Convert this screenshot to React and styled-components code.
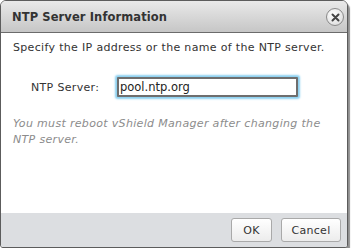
import styled, { createGlobalStyle } from "styled-components";

const Global = createGlobalStyle`
  body {
    margin: 0;
    background: #ffffff;
    font-family: "DejaVu Sans", Verdana, sans-serif;
  }
`;

const Dialog = styled.div`
  width: 346px;
  height: 246px;
  border: 1px solid #5c5c5c;
  border-radius: 6px 6px 3px 3px;
  box-shadow: 2px 3px 1px #8f8f8f;
  display: flex;
  flex-direction: column;
  overflow: hidden;
  background: #fff;
`;

const Header = styled.div`
  height: 31px;
  flex: none;
  display: flex;
  align-items: center;
  justify-content: space-between;
  padding: 0 3px 0 11px;
  background: linear-gradient(#e9e9e9, #c6c6c6);
  border-bottom: 1px solid #6b6b6b;
`;

const Title = styled.div`
  font-size: 11.5px;
  font-weight: bold;
  color: #333;
  letter-spacing: 0.1px;
`;

const CloseBtn = styled.div`
  width: 16px;
  height: 16px;
  border-radius: 50%;
  border: 1px solid #8a8a8a;
  background: radial-gradient(circle at 40% 35%, #ffffff, #d6d6d6);
  display: flex;
  align-items: center;
  justify-content: center;
  margin-top: 1px;
`;

const Body = styled.div`
  flex: 1;
  padding: 8px 12px 0 12px;
  color: #333;
  font-size: 11px;
  letter-spacing: 0.33px;
`;

const Intro = styled.div`
  line-height: 14px;
`;

const FieldRow = styled.div`
  display: flex;
  align-items: center;
  margin-top: 22px;
  padding-left: 18px;
`;

const Label = styled.div`
  width: 86px;
  font-size: 11px;
`;

const Input = styled.input`
  width: 175px;
  height: 16px;
  border: 2px solid #6e6e6e;
  border-radius: 1px;
  padding: 0 1px;
  font-family: "DejaVu Sans", Verdana, sans-serif;
  font-size: 11.5px;
  color: #222;
  outline: none;
  box-shadow: 0 0 2px 2px #8cd0f0;
`;

const Note = styled.div`
  margin-top: 19px;
  font-style: italic;
  color: #8c8c8c;
  line-height: 16px;
  font-size: 11px;
`;

const Footer = styled.div`
  height: 34px;
  flex: none;
  background: #dcdee1;
  display: flex;
  align-items: center;
  justify-content: flex-end;
  gap: 9px;
  padding-right: 6px;
`;

const Button = styled.button`
  height: 24px;
  min-width: ${(p) => p.$w}px;
  border: 1px solid #a9a9a9;
  border-radius: 3px;
  background: linear-gradient(#ffffff, #ececec);
  font-family: "DejaVu Sans", Verdana, sans-serif;
  font-size: 11px;
  letter-spacing: 0.3px;
  color: #333;
  padding: 0 8px;
`;

export default function App() {
  return (
    <>
      <Global />
      <Dialog>
        <Header>
          <Title>NTP Server Information</Title>
          <CloseBtn>
            <svg width="9" height="9" viewBox="0 0 9 9">
              <path d="M1.5 1.5 L7.5 7.5 M7.5 1.5 L1.5 7.5" stroke="#444" strokeWidth="2" strokeLinecap="round" />
            </svg>
          </CloseBtn>
        </Header>
        <Body>
          <Intro>Specify the IP address or the name of the NTP server.</Intro>
          <FieldRow>
            <Label>NTP Server:</Label>
            <Input defaultValue="pool.ntp.org" />
          </FieldRow>
          <Note>You must reboot vShield Manager after changing the NTP server.</Note>
        </Body>
        <Footer>
          <Button $w={41}>OK</Button>
          <Button $w={60}>Cancel</Button>
        </Footer>
      </Dialog>
    </>
  );
}
